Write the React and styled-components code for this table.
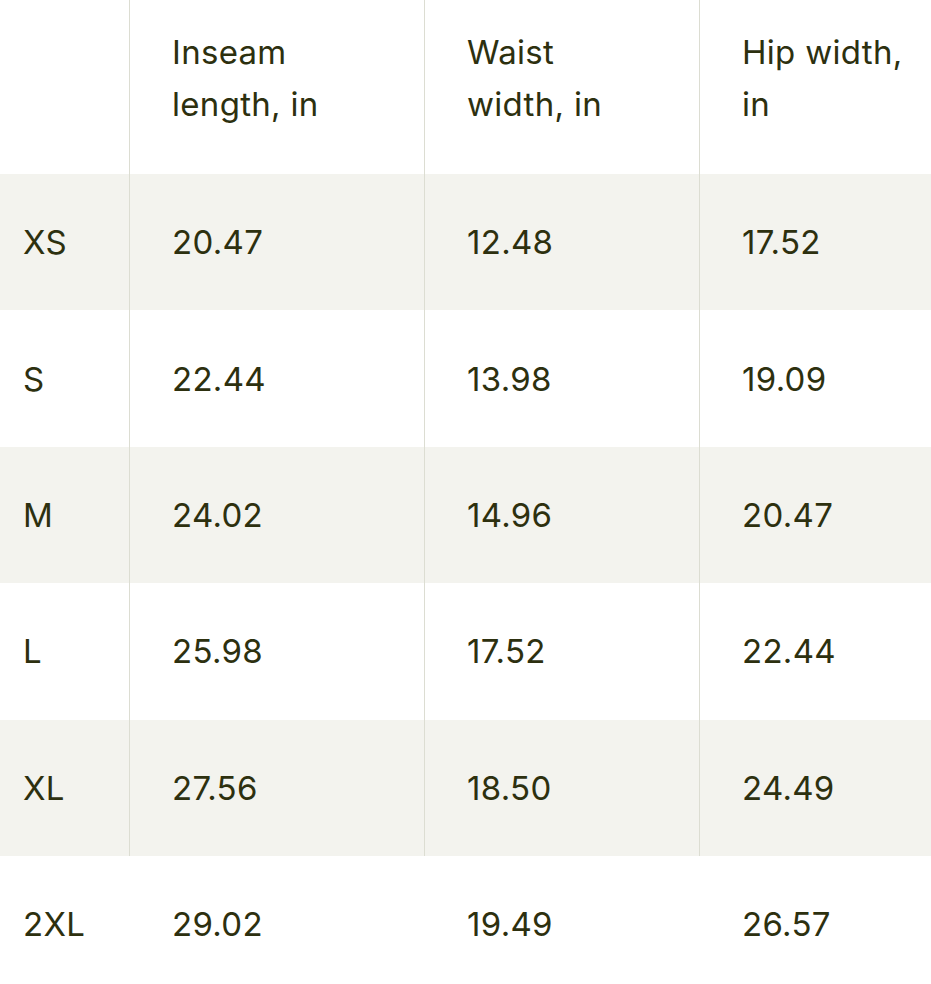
import React from "react";
import styled, { createGlobalStyle } from "styled-components";

const Global = createGlobalStyle`
  html, body { margin: 0; padding: 0; background: #ffffff; overflow-x: hidden; }
  body { font-family: Inter, "Noto Sans", sans-serif; }
`;

const Table = styled.div`
  display: flex;
  flex-direction: column;
  width: 960px;
  color: #2d300f;
  font-family: Inter, "Noto Sans", sans-serif;
  font-size: 33px;
  letter-spacing: 0.3px;
  line-height: 52px;
`;

const Row = styled.div`
  display: grid;
  grid-template-columns: 130px 295px 275px 260px;
  height: ${(p) => (p.$header ? "174px" : "136.4px")};
  background: ${(p) => (p.$shaded ? "#f3f3ee" : "#ffffff")};
`;

const Cell = styled.div`
  display: flex;
  align-items: center;
  padding-left: ${(p) => (p.$first ? "23px" : "42px")};
  padding-right: 44px;
  padding-bottom: ${(p) => (p.$head ? "18px" : "0")};
  border-right: ${(p) => (p.$divider ? "1.5px solid #dcddd2" : "none")};
  box-sizing: border-box;
`;

const columns = ["", "Inseam length, in", "Waist width, in", "Hip width, in"];
const rows = [
  ["XS", "20.47", "12.48", "17.52"],
  ["S", "22.44", "13.98", "19.09"],
  ["M", "24.02", "14.96", "20.47"],
  ["L", "25.98", "17.52", "22.44"],
  ["XL", "27.56", "18.50", "24.49"],
  ["2XL", "29.02", "19.49", "26.57"],
];

export default function App() {
  return (
    <>
      <Global />
      <Table>
        <Row $header>
          {columns.map((c, i) => (
            <Cell key={i} $head $first={i === 0} $divider={i < 3}>
              {c}
            </Cell>
          ))}
        </Row>
        {rows.map((r, ri) => (
          <Row key={ri} $shaded={ri % 2 === 0}>
            {r.map((v, i) => (
              <Cell key={i} $first={i === 0} $divider={i < 3 && ri < rows.length - 1}>
                {v}
              </Cell>
            ))}
          </Row>
        ))}
      </Table>
    </>
  );
}
